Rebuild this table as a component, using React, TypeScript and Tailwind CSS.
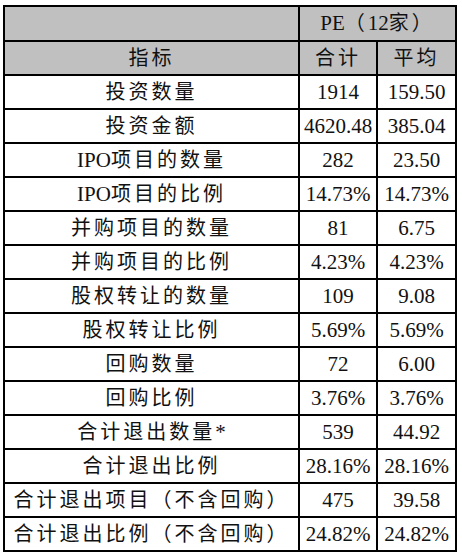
const rows: [string, string, string][] = [
  ["投资数量", "1914", "159.50"],
  ["投资金额", "4620.48", "385.04"],
  ["IPO项目的数量", "282", "23.50"],
  ["IPO项目的比例", "14.73%", "14.73%"],
  ["并购项目的数量", "81", "6.75"],
  ["并购项目的比例", "4.23%", "4.23%"],
  ["股权转让的数量", "109", "9.08"],
  ["股权转让比例", "5.69%", "5.69%"],
  ["回购数量", "72", "6.00"],
  ["回购比例", "3.76%", "3.76%"],
  ["合计退出数量*", "539", "44.92"],
  ["合计退出比例", "28.16%", "28.16%"],
  ["合计退出项目（不含回购）", "475", "39.58"],
  ["合计退出比例（不含回购）", "24.82%", "24.82%"],
];

// latin runs stay tight, CJK runs get a bit of tracking like the source font
function Label({ text }: { text: string }) {
  const parts = text.split(/([\x00-\x7F]+)/).filter(Boolean);
  return (
    <>
      {parts.map((p, i) =>
        /^[\x00-\x7F]+$/.test(p) ? (
          <span key={i}>{p}</span>
        ) : (
          <span key={i} className="tracking-[3px] text-[20px]">
            {p}
          </span>
        )
      )}
    </>
  );
}

const cell = "border-2 border-black p-0 text-center align-middle whitespace-nowrap";

export default function App() {
  return (
    <div className="min-h-[558px] w-[462px] bg-white pl-[3px] pt-[5px] font-['Liberation_Serif','Noto_Sans_CJK_SC',serif] text-[21px] leading-none text-[#111]">
      <table className="w-[454px] table-fixed border-collapse">
        <colgroup>
          <col className="w-[295px]" />
          <col className="w-[78px]" />
          <col className="w-[79px]" />
        </colgroup>
        <tbody>
          <tr className="h-[35px] bg-[#c0c0c0]">
            <td className={cell} />
            <td className={cell} colSpan={2}>
              <Label text="PE（12家）" />
            </td>
          </tr>
          <tr className="h-[34px] bg-[#c0c0c0]">
            <td className={cell}>
              <Label text="指标" />
            </td>
            <td className={cell}>
              <Label text="合计" />
            </td>
            <td className={cell}>
              <Label text="平均" />
            </td>
          </tr>
          {rows.map(([name, total, avg]) => (
            <tr key={name} className="h-[34px]">
              <td className={cell}>
                <Label text={name} />
              </td>
              <td className={cell}>{total}</td>
              <td className={cell}>{avg}</td>
            </tr>
          ))}
        </tbody>
      </table>
    </div>
  );
}
